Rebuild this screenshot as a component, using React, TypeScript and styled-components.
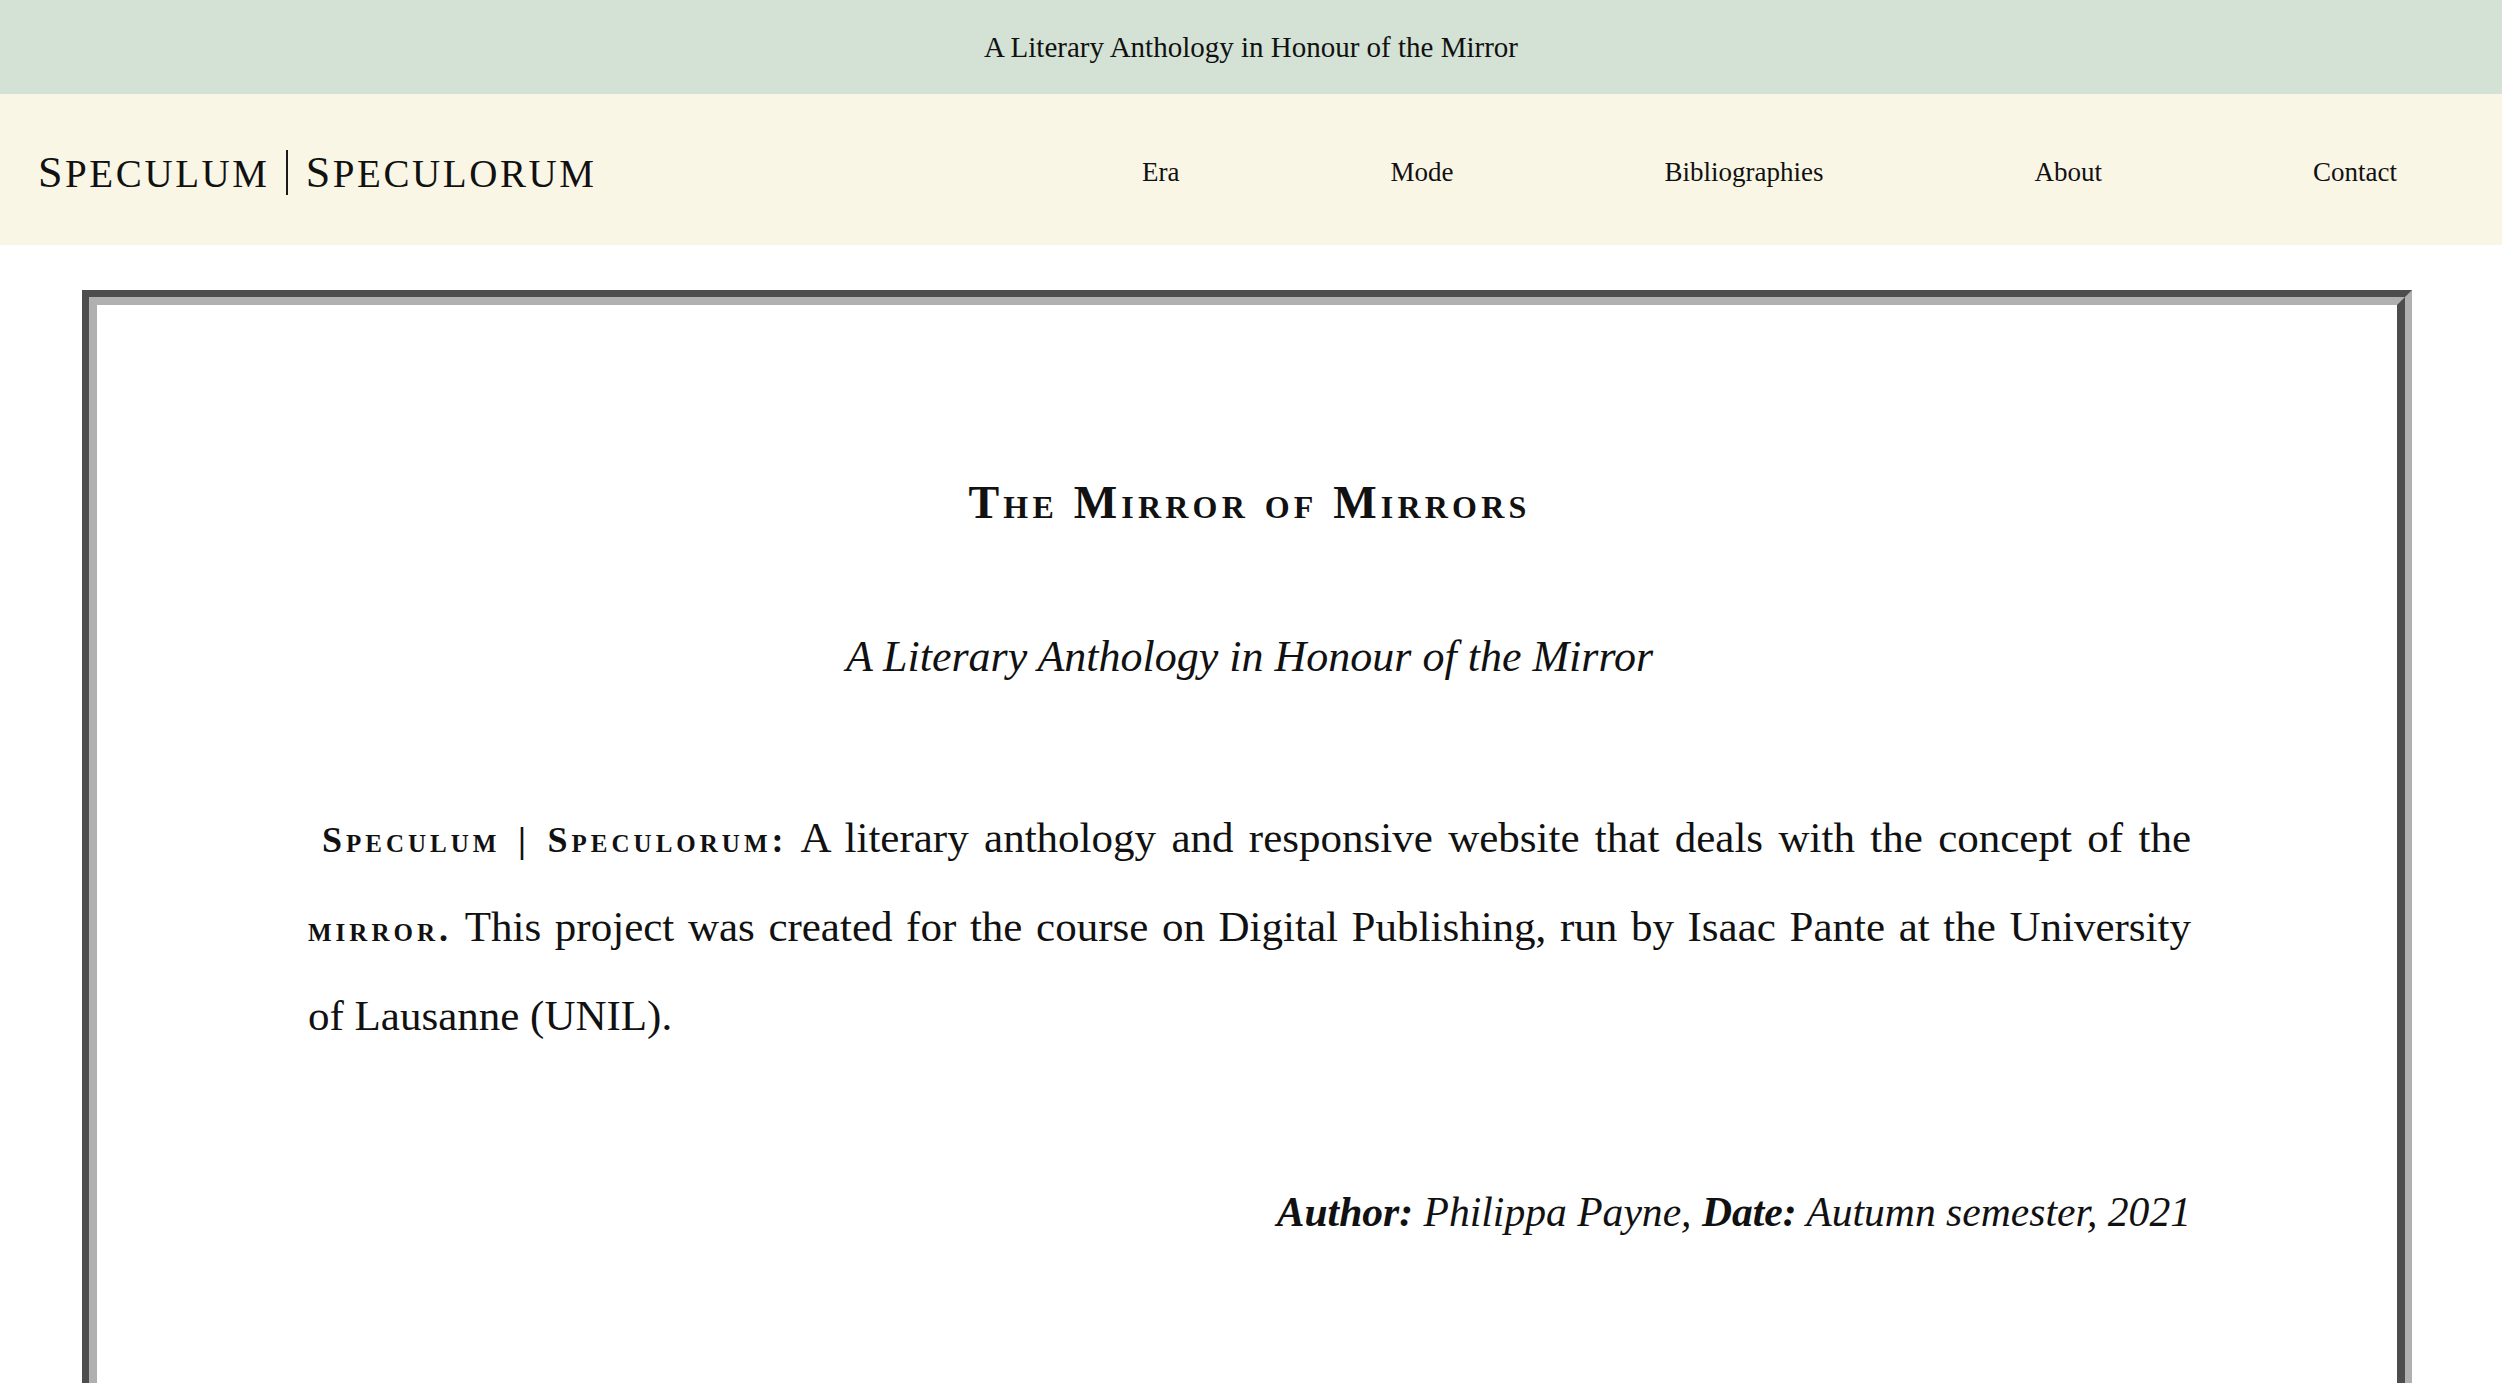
import React from "react";
import styled, { createGlobalStyle } from "styled-components";

const GlobalStyle = createGlobalStyle`
  html, body {
    margin: 0;
    padding: 0;
    background: #ffffff;
  }
  body {
    font-family: "Liberation Serif", "Times New Roman", serif;
    color: #111111;
  }
  * { box-sizing: border-box; }
`;

const TopBar = styled.div`
  height: 94px;
  background: #d3e2d4;
  display: flex;
  justify-content: center;
  align-items: center;
  font-size: 29px;
  line-height: 94px;
  color: #111;
`;

const Header = styled.header`
  height: 151px;
  background: #faf6e6;
  display: flex;
  align-items: center;
  justify-content: space-between;
  padding: 6px 105px 0 38px;
`;

const Logo = styled.div`
  display: flex;
  align-items: center;
  color: #111;
`;

const LogoWord = styled.span`
  font-size: 39px;
  letter-spacing: 2.6px;
  text-transform: uppercase;
  line-height: 1;
`;

const LogoInitial = styled.span`
  font-size: 44px;
`;

const LogoDivider = styled.span`
  display: block;
  width: 2px;
  height: 45px;
  background: #1a1a1a;
  margin: 0 18px 0 16px;
`;

const NavList = styled.ul`
  list-style: none;
  margin: 0;
  padding: 0;
  display: flex;
  gap: 211px;
`;

const NavLink = styled.a`
  font-size: 27px;
  color: #111;
  text-decoration: none;
`;

const Main = styled.main`
  padding: 45px 90px 0 82px;
`;

const FrameOuter = styled.section`
  border-style: solid;
  border-width: 7px;
  border-color: #4d4d4d #b0b0b0 #b0b0b0 #4d4d4d;
  border-bottom: none;
`;

const FrameInner = styled.div`
  border-style: solid;
  border-width: 8px;
  border-color: #b0b0b0 #4d4d4d #4d4d4d #b0b0b0;
  border-bottom: none;
  background: #ffffff;
  padding: 171px 206px 200px 211px;
`;

const Title = styled.h1`
  margin: 0;
  text-align: center;
  font-size: 46px;
  line-height: 53px;
  font-weight: bold;
  font-variant: small-caps;
  letter-spacing: 4.2px;
`;

const Subtitle = styled.p`
  margin: 98px 0 0;
  text-align: center;
  font-size: 44px;
  line-height: 60px;
  font-style: italic;
`;

const Body = styled.p`
  margin: 106px 0 0;
  font-size: 43px;
  line-height: 89px;
  text-align: justify;
  text-indent: 14px;
`;

const SmallCaps = styled.span`
  font-size: 36px;
  line-height: 1;
  font-weight: bold;
  font-variant: small-caps;
  letter-spacing: 4px;
`;

const Byline = styled.p`
  margin: 122px 0 0;
  text-align: right;
  font-size: 41.6px;
  line-height: 60px;
  font-style: italic;
`;

const BylineLabel = styled.strong`
  font-weight: bold;
`;

const navItems = ["Era", "Mode", "Bibliographies", "About", "Contact"];

export default function App() {
  return (
    <>
      <GlobalStyle />
      <TopBar>A Literary Anthology in Honour of the Mirror</TopBar>
      <Header>
        <Logo>
          <LogoWord>
            <LogoInitial>S</LogoInitial>peculum
          </LogoWord>
          <LogoDivider />
          <LogoWord>
            <LogoInitial>S</LogoInitial>peculorum
          </LogoWord>
        </Logo>
        <nav>
          <NavList>
            {navItems.map((item) => (
              <li key={item}>
                <NavLink href="#">{item}</NavLink>
              </li>
            ))}
          </NavList>
        </nav>
      </Header>
      <Main>
        <FrameOuter>
          <FrameInner>
            <Title>The Mirror of Mirrors</Title>
            <Subtitle>A Literary Anthology in Honour of the Mirror</Subtitle>
            <Body>
              <SmallCaps>Speculum | Speculorum:</SmallCaps> A literary anthology and
              responsive website that deals with the concept of the{" "}
              <SmallCaps>mirror.</SmallCaps> This project was created for the course on
              Digital Publishing, run by Isaac Pante at the University{" "}
              {"of\u00a0Lausanne"} (UNIL).
            </Body>
            <Byline>
              <BylineLabel>Author:</BylineLabel> Philippa Payne,{" "}
              <BylineLabel>Date:</BylineLabel> Autumn semester, 2021
            </Byline>
          </FrameInner>
        </FrameOuter>
      </Main>
    </>
  );
}
